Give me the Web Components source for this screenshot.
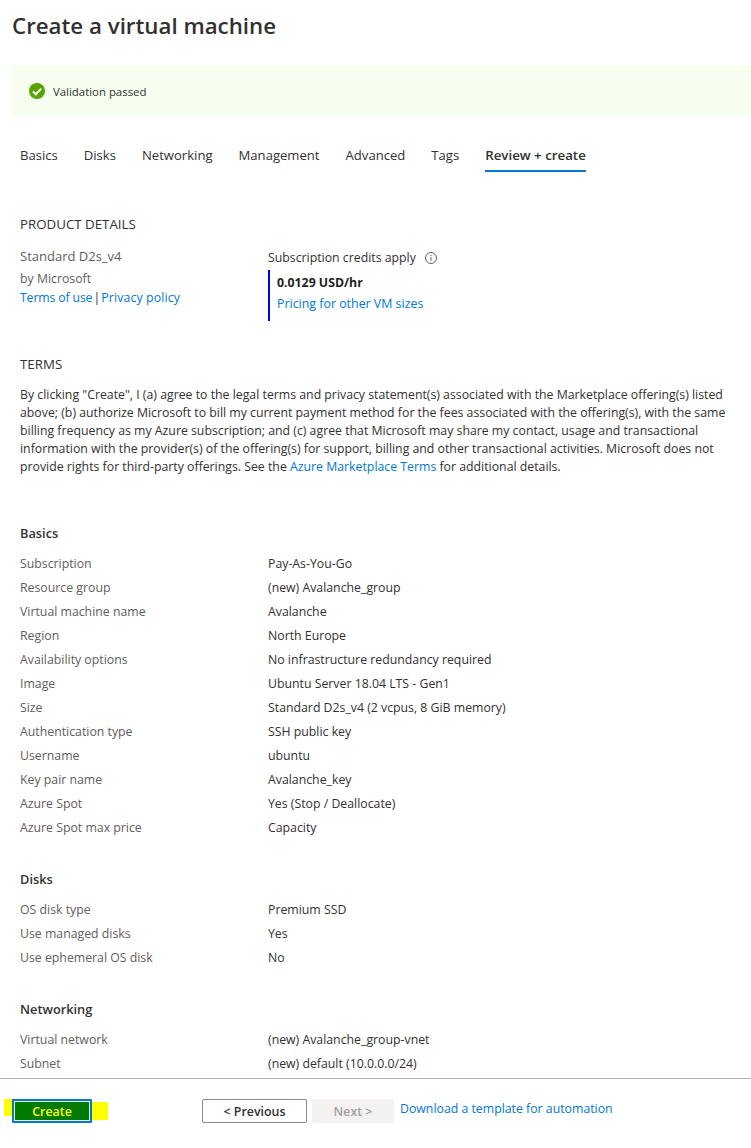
<!DOCTYPE html>
<html>
<head>
<meta charset="utf-8">
<title>Create a virtual machine</title>
<style>
    html, body { margin: 0; padding: 0; height: 100%; background: #fff; overflow: hidden; }
    body { font-family: "Open Sans", "Noto Sans", sans-serif; font-size: 12.3px; color: #323130; }
</style>
</head>
<body>
<vm-wizard>
    <vm-title slot="top">Create a virtual machine</vm-title>
    <vm-banner slot="top">Validation passed</vm-banner>
    <vm-tabs slot="top" items="Basics,Disks,Networking,Management,Advanced,Tags,Review + create" active="6"></vm-tabs>

    <vm-product></vm-product>
    <vm-terms></vm-terms>

    <vm-group heading="Basics" style="--top: 47px">
        <vm-row label="Subscription" value="Pay-As-You-Go"></vm-row>
        <vm-row label="Resource group" value="(new) Avalanche_group"></vm-row>
        <vm-row label="Virtual machine name" value="Avalanche"></vm-row>
        <vm-row label="Region" value="North Europe"></vm-row>
        <vm-row label="Availability options" value="No infrastructure redundancy required"></vm-row>
        <vm-row label="Image" value="Ubuntu Server 18.04 LTS - Gen1"></vm-row>
        <vm-row label="Size" value="Standard D2s_v4 (2 vcpus, 8 GiB memory)"></vm-row>
        <vm-row label="Authentication type" value="SSH public key"></vm-row>
        <vm-row label="Username" value="ubuntu"></vm-row>
        <vm-row label="Key pair name" value="Avalanche_key"></vm-row>
        <vm-row label="Azure Spot" value="Yes (Stop / Deallocate)"></vm-row>
        <vm-row label="Azure Spot max price" value="Capacity"></vm-row>
    </vm-group>
    <vm-group heading="Disks">
        <vm-row label="OS disk type" value="Premium SSD"></vm-row>
        <vm-row label="Use managed disks" value="Yes"></vm-row>
        <vm-row label="Use ephemeral OS disk" value="No"></vm-row>
    </vm-group>
    <vm-group heading="Networking">
        <vm-row label="Virtual network" value="(new) Avalanche_group-vnet"></vm-row>
        <vm-row label="Subnet" value="(new) default (10.0.0.0/24)"></vm-row>
    </vm-group>

    <vm-footer slot="footer"></vm-footer>
</vm-wizard>

<script>
const linkColor = '#0078d4';

class VmWizard extends HTMLElement {
    constructor() {
        super();
        this.attachShadow({ mode: 'open' });
        this.shadowRoot.innerHTML = `
            <style>
                :host { display: flex; flex-direction: column; height: 1148px; width: 751px; overflow: hidden; }
                .scroll { flex: 1; min-height: 0; overflow: hidden; }
                .body { padding: 0 0 0 20px; }
            </style>
            <div class="scroll">
                <slot name="top"></slot>
                <div class="body"><slot></slot></div>
            </div>
            <slot name="footer"></slot>
        `;
    }
}

class VmTitle extends HTMLElement {
    constructor() {
        super();
        this.attachShadow({ mode: 'open' });
        this.shadowRoot.innerHTML = `
            <style>
                :host { display: block; padding: 8px 0 0 12px; height: 36px; font-size: 22.3px; line-height: 36px; font-weight: 600; color: #323130; white-space: nowrap; }
            </style>
            <slot></slot>
        `;
    }
}

class VmBanner extends HTMLElement {
    constructor() {
        super();
        this.attachShadow({ mode: 'open' });
        this.shadowRoot.innerHTML = `
            <style>
                :host { display: flex; align-items: center; gap: 8px; margin: 22px 0 0 12px; height: 50px; padding-left: 17px; background: #f6ffef; font-size: 11.4px; color: #323130; }
                svg { width: 16px; height: 16px; display: block; }
            </style>
            <svg viewBox="0 0 16 16">
                <circle cx="8" cy="8" r="8" fill="#57a300"/>
                <path d="M4 8.4l2.8 2.8L12.2 5.6" fill="none" stroke="#fff" stroke-width="2"/>
            </svg>
            <slot></slot>
        `;
    }
}

class VmTabs extends HTMLElement {
    constructor() {
        super();
        this.attachShadow({ mode: 'open' });
    }

    connectedCallback() {
        const items = this.getAttribute('items').split(',');
        const active = parseInt(this.getAttribute('active'));
        this.shadowRoot.innerHTML = `
            <style>
                :host { display: flex; gap: 26px; margin: 23px 0 0 20px; height: 33px; white-space: nowrap; }
                .tab { height: 31px; line-height: 32px; font-size: 13.1px; color: #323130; }
                .active { font-size: 13.3px; font-weight: 600; border-bottom: 2px solid #0078d4; }
            </style>
            ${items.map((t, i) => `<div class="tab ${i === active ? 'active' : ''}">${t}</div>`).join('')}
        `;
    }
}

class VmProduct extends HTMLElement {
    constructor() {
        super();
        this.attachShadow({ mode: 'open' });
        this.shadowRoot.innerHTML = `
            <style>
                :host { display: block; padding-top: 42px; white-space: nowrap; }
                h2 { margin: 0; font-size: 13.3px; line-height: 20px; font-weight: 400; height: 20px; }
                .cols { display: grid; grid-template-columns: 248px 1fr; margin-top: 12px; }
                .name { line-height: 20px; height: 20px; color: #605e5c; font-size: 13px; }
                .by { line-height: 20px; height: 20px; margin-top: 3px; color: #605e5c; }
                .links { display: flex; gap: 1px; line-height: 20px; margin-top: -1px; }
                .links a:first-child { letter-spacing: -0.15px; }
                .links a:last-child { letter-spacing: 0.15px; }
                a { color: ${linkColor}; text-decoration: none; }
                .credits { display: flex; align-items: center; gap: 9px; height: 20px; line-height: 20px; margin-top: 2px; }
                svg { width: 12px; height: 12px; display: block; }
                .price { margin-top: 2px; height: 51px; border-left: 2px solid #0000f0; padding-left: 7px; box-sizing: border-box; }
                .rate { font-weight: 700; line-height: 20px; padding-top: 3px; color: #201f1e; }
                .other { line-height: 20px; margin-top: 1px; font-size: 12.4px; }
            </style>
            <h2>PRODUCT DETAILS</h2>
            <div class="cols">
                <div>
                    <div class="name">Standard D2s_v4</div>
                    <div class="by">by Microsoft</div>
                    <div class="links"><a>Terms of use</a><span>|</span><a>Privacy policy</a></div>
                </div>
                <div>
                    <div class="credits">Subscription credits apply
                        <svg viewBox="0 0 12 12"><circle cx="6" cy="6" r="5.5" fill="none" stroke="#605e5c"/><path d="M6 5.2v3.6M6 3v1.1" stroke="#605e5c" fill="none"/></svg>
                    </div>
                    <div class="price">
                        <div class="rate">0.0129 USD/hr</div>
                        <div class="other"><a>Pricing for other VM sizes</a></div>
                    </div>
                </div>
            </div>
        `;
    }
}

class VmTerms extends HTMLElement {
    constructor() {
        super();
        this.attachShadow({ mode: 'open' });
        this.shadowRoot.innerHTML = `
            <style>
                :host { display: block; padding-top: 33px; white-space: nowrap; }
                h2 { margin: 0; font-size: 13.3px; line-height: 20px; font-weight: 400; }
                p { margin: 12px 0 0; line-height: 18px; color: #323130; }
                a { color: ${linkColor}; text-decoration: none; }
            </style>
            <h2>TERMS</h2>
            <p>By clicking "Create", I (a) agree to the legal terms and privacy statement(s) associated with the Marketplace offering(s) listed<br>
            above; (b) authorize Microsoft to bill my current payment method for the fees associated with the offering(s), with the same<br>
            billing frequency as my Azure subscription; and (c) agree that Microsoft may share my contact, usage and transactional<br>
            information with the provider(s) of the offering(s) for support, billing and other transactional activities. Microsoft does not<br>
            provide rights for third-party offerings. See the <a>Azure Marketplace Terms</a> for additional details.</p>
        `;
    }
}

class VmGroup extends HTMLElement {
    constructor() {
        super();
        this.attachShadow({ mode: 'open' });
    }

    connectedCallback() {
        this.shadowRoot.innerHTML = `
            <style>
                :host { display: block; padding-top: var(--top, 29px); }
                h3 { margin: 0 0 9px; font-size: 12.8px; line-height: 20px; font-weight: 600; color: #323130; }
            </style>
            <h3>${this.getAttribute('heading')}</h3>
            <slot></slot>
        `;
    }
}

class VmRow extends HTMLElement {
    constructor() {
        super();
        this.attachShadow({ mode: 'open' });
    }

    connectedCallback() {
        this.shadowRoot.innerHTML = `
            <style>
                :host { display: grid; grid-template-columns: 248px 1fr; height: 24px; line-height: 24px; white-space: nowrap; }
                .label { color: #605e5c; }
                .value { color: #323130; }
            </style>
            <div class="label">${this.getAttribute('label')}</div>
            <div class="value">${this.getAttribute('value')}</div>
        `;
    }
}

class VmFooter extends HTMLElement {
    constructor() {
        super();
        this.attachShadow({ mode: 'open' });
        this.shadowRoot.innerHTML = `
            <style>
                :host { display: flex; align-items: flex-start; height: 49px; border-top: 1px solid #b3b0ad; padding: 20px 0 0 12px; font-size: 12.4px; white-space: nowrap; }
                .create-wrap { position: relative; width: 80px; height: 24px; }
                .create-wrap::before, .create-wrap::after { content: ''; position: absolute; background: #ffff00; }
                .create-wrap::before { left: -8px; top: 0; width: 10px; height: 17px; }
                .create-wrap::after { left: 80px; top: 3px; width: 16px; height: 18px; }
                button { font: inherit; height: 24px; padding: 0; box-sizing: border-box; font-weight: 600; border-radius: 2px; }
                .create { position: relative; z-index: 1; display: block; width: 80px; background: #007a00; color: #ffff00; border: 2px solid #0078d4; outline: 1px solid #f2f2c0; outline-offset: -3px; border-radius: 1px; }
                .prev { margin-left: 110px; width: 105px; background: #fff; color: #323130; border: 1px solid #8a8886; }
                .next { margin-left: 5px; width: 82px; background: #f3f2f1; color: #a19f9d; border: 0; }
                a { margin-left: 6px; margin-top: 1px; color: ${linkColor}; line-height: 18px; font-size: 12.3px; }
            </style>
            <div class="create-wrap"><button class="create">Create</button></div>
            <button class="prev">&lt; Previous</button>
            <button class="next">Next &gt;</button>
            <a>Download a template for automation</a>
        `;
    }
}

customElements.define('vm-wizard', VmWizard);
customElements.define('vm-title', VmTitle);
customElements.define('vm-banner', VmBanner);
customElements.define('vm-tabs', VmTabs);
customElements.define('vm-product', VmProduct);
customElements.define('vm-terms', VmTerms);
customElements.define('vm-group', VmGroup);
customElements.define('vm-row', VmRow);
customElements.define('vm-footer', VmFooter);
</script>
</body>
</html>
